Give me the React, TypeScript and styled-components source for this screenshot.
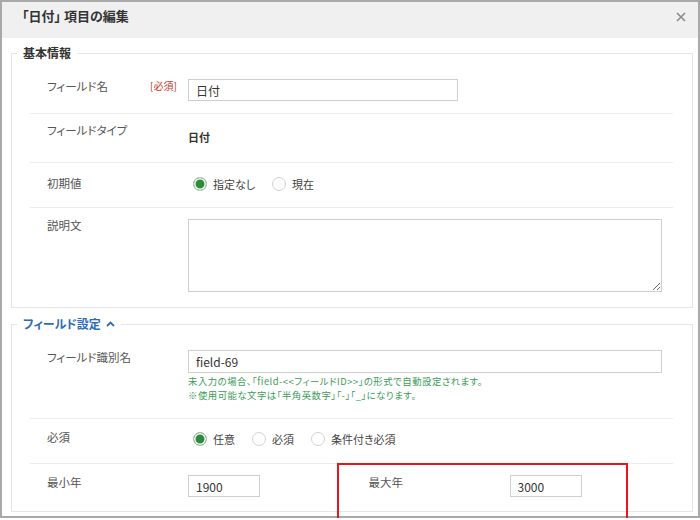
import styled, { createGlobalStyle } from 'styled-components';

const GlobalStyle = createGlobalStyle`
	html, body {
		margin: 0;
		padding: 0;
		background: #fff;
		overflow: hidden;
	}
	body {
		font-family: 'Noto Sans CJK JP', 'Noto Sans', sans-serif;
		font-feature-settings: 'palt';
		color: #444;
	}
`;

const Dialog = styled.div`
	position: relative;
	width: 700px;
	height: 518px;
	box-sizing: border-box;
	border: 2px solid #a9a9a9;
	display: flex;
	flex-direction: column;
	background: #fff;
`;

const Header = styled.div`
	height: 36px;
	flex: 0 0 36px;
	box-sizing: border-box;
	background: #f0f0f0;
	display: flex;
	align-items: flex-start;
	justify-content: space-between;
	padding: 5px 11px 0 20px;
`;

const Title = styled.div`
	font-size: 13px;
	font-weight: bold;
	line-height: 18px;
	color: #333;
`;

const Close = styled.div`
	width: 12px;
	height: 12px;
	display: flex;
	align-items: center;
	justify-content: center;
	margin-top: 4px;
`;

const Body = styled.div`
	flex: 1;
	padding: 6px 5px 0 9px;
`;

const Fieldset = styled.fieldset<{ $mt?: number; $pt?: number; $pb?: number }>`
	margin: ${(p) => p.$mt ?? 0}px 0 0;
	padding: ${(p) => p.$pt ?? 0}px 0 ${(p) => p.$pb ?? 0}px;
	border: 1px solid #e6e6e6;
	min-width: 0;
`;

const Legend = styled.legend<{ $blue?: boolean }>`
	margin-left: 5px;
	padding: 0 6px;
	height: 18px;
	font-size: 12px;
	font-weight: bold;
	line-height: 18px;
	color: ${(p) => (p.$blue ? '#2d6db4' : '#333')};
	display: flex;
	align-items: center;
	gap: 5px;
`;

const Row = styled.div<{ $pt: number; $pb: number; $last?: boolean }>`
	margin: 0 19px 0 18px;
	padding: ${(p) => p.$pt}px 0 ${(p) => p.$pb}px;
	border-bottom: ${(p) => (p.$last ? 'none' : '1px solid #ececec')};
	display: grid;
	grid-template-columns: 158px 1fr;
	align-items: start;
`;

const SplitRow = styled(Row)`
	grid-template-columns: 1fr 1fr;
`;

const Cell = styled.div`
	position: relative;
	display: grid;
	grid-template-columns: 158px 1fr;
	align-items: start;
`;

const Label = styled.div`
	padding-left: 17px;
	font-size: 11.5px;
	line-height: 18px;
	height: 18px;
	color: #555;
	display: flex;
	align-items: center;
	white-space: nowrap;
`;

const LabelText = styled.span`
	flex: 0 0 103px;
`;

const RequiredTag = styled.span`
	font-size: 10px;
	color: #c0392b;
`;

const Control = styled.div<{ $mt?: number }>`
	margin-top: ${(p) => p.$mt ?? 0}px;
	min-width: 0;
`;

const TextInput = styled.input<{ $w: number; $h: number }>`
	display: block;
	box-sizing: border-box;
	width: ${(p) => p.$w}px;
	height: ${(p) => p.$h}px;
	border: 1px solid #cfcfcf;
	padding: 0 7px;
	font-family: inherit;
	font-feature-settings: 'palt';
	font-size: 12px;
	color: #333;
	outline: none;
`;

const TextArea = styled.textarea`
	display: block;
	box-sizing: border-box;
	width: 474px;
	height: 73px;
	border: 1px solid #cfcfcf;
	font-family: inherit;
	outline: none;
`;

const Value = styled.div`
	font-size: 11px;
	font-weight: bold;
	line-height: 18px;
	color: #333;
`;

const Help = styled.div`
	margin-top: 2px;
`;

const HelpLine = styled.div`
	font-size: 9.4px;
	letter-spacing: 0.5px;
	line-height: 13.5px;
	height: 13.5px;
	color: #3b9c57;
	white-space: nowrap;
`;

const RadioGroup = styled.div`
	display: flex;
	align-items: center;
	gap: 17px;
	height: 18px;
	padding-left: 5px;
`;

const RadioOption = styled.label`
	display: flex;
	align-items: center;
	gap: 6px;
	font-size: 11px;
	color: #444;
`;

const RadioDot = styled.span<{ $on?: boolean }>`
	width: 14px;
	height: 14px;
	box-sizing: border-box;
	border-radius: 50%;
	border: 1px solid ${(p) => (p.$on ? '#a9c2a9' : '#d2d2d2')};
	background: ${(p) => (p.$on ? '#2e8b3e' : '#fff')};
	box-shadow: ${(p) => (p.$on ? 'inset 0 0 0 1.5px #fff' : 'none')};
`;

const Highlight = styled.div`
	position: absolute;
	top: -10px;
	left: -15px;
	width: 291px;
	height: 57px;
	box-sizing: border-box;
	border: 2px solid #e8161c;
	pointer-events: none;
`;

const Radios = ({ options, checked }: { options: string[]; checked: number }) => (
	<RadioGroup>
		{options.map((o, i) => (
			<RadioOption key={o}>
				<RadioDot $on={i === checked} />
				{o}
			</RadioOption>
		))}
	</RadioGroup>
);

const ChevronUp = () => (
	<svg width='9' height='6' viewBox='0 0 9 6'>
		<path d='M1 5 L4.5 1.5 L8 5' fill='none' stroke='#2d6db4' strokeWidth='1.8' />
	</svg>
);

export default function App() {
	return (
		<>
			<GlobalStyle />
			<Dialog>
				<Header>
					<Title>「日付」 項目の編集</Title>
					<Close>
						<svg width='10' height='10' viewBox='0 0 10 10'>
							<path d='M1 1 L9 9 M9 1 L1 9' stroke='#8a8a8a' strokeWidth='1.6' />
						</svg>
					</Close>
				</Header>
				<Body>
					<Fieldset $pt={5}>
						<Legend>基本情報</Legend>
						<Row $pt={10} $pb={12}>
							<Label>
								<LabelText>フィールド名</LabelText>
								<RequiredTag>[必須]</RequiredTag>
							</Label>
							<Control $mt={2}>
								<TextInput $w={270} $h={22} readOnly defaultValue='日付' />
							</Control>
						</Row>
						<Row $pt={7} $pb={16}>
							<Label>フィールドタイプ</Label>
							<Control $mt={7}>
								<Value>日付</Value>
							</Control>
						</Row>
						<Row $pt={11} $pb={14}>
							<Label>初期値</Label>
							<Control $mt={1}>
								<Radios options={['指定なし', '現在']} checked={0} />
							</Control>
						</Row>
						<Row $pt={8} $pb={15} $last>
							<Label>説明文</Label>
							<Control $mt={3}>
								<TextArea readOnly />
							</Control>
						</Row>
					</Fieldset>
					<Fieldset $mt={7} $pb={2}>
						<Legend $blue>
							フィールド設定
							<ChevronUp />
						</Legend>
						<Row $pt={15} $pb={16}>
							<Label>フィールド識別名</Label>
							<Control $mt={2}>
								<TextInput $w={474} $h={23} readOnly defaultValue='field-69' />
								<Help>
									<HelpLine>未入力の場合、「field-&lt;&lt;フィールドID&gt;&gt;」の形式で自動設定されます。</HelpLine>
									<HelpLine>※使用可能な文字は「半角英数字」「-」「_」になります。</HelpLine>
								</Help>
							</Control>
						</Row>
						<Row $pt={9} $pb={15}>
							<Label>必須</Label>
							<Control $mt={2}>
								<Radios options={['任意', '必須', '条件付き必須']} checked={0} />
							</Control>
						</Row>
						<SplitRow $pt={9} $pb={12} $last>
							<Cell>
								<Label>最小年</Label>
								<Control $mt={2}>
									<TextInput $w={72} $h={22} readOnly defaultValue='1900' />
								</Control>
							</Cell>
							<Cell>
								<Label>最大年</Label>
								<Control $mt={2}>
									<TextInput $w={72} $h={22} readOnly defaultValue='3000' />
								</Control>
								<Highlight />
							</Cell>
						</SplitRow>
					</Fieldset>
				</Body>
			</Dialog>
		</>
	);
}
